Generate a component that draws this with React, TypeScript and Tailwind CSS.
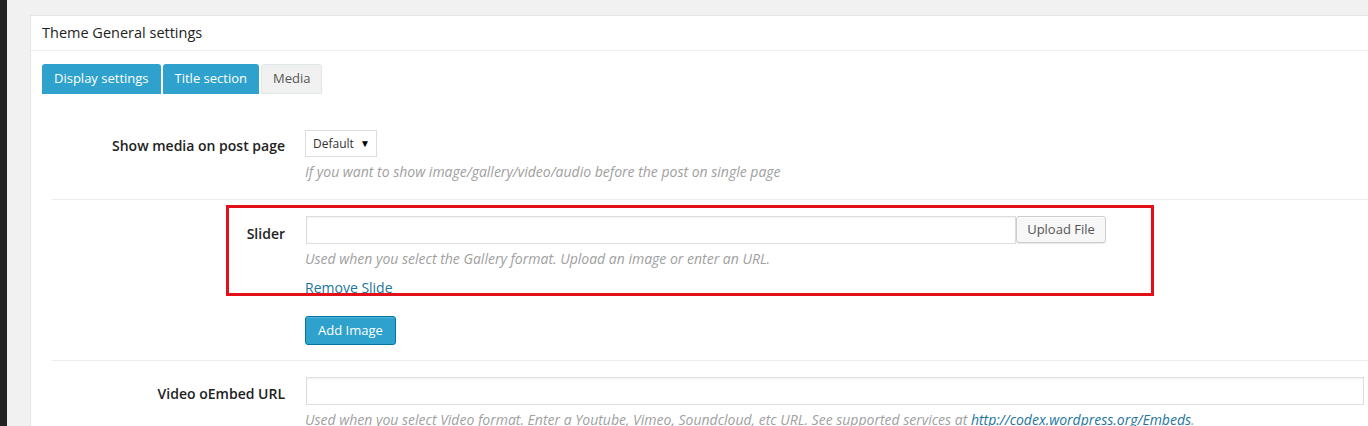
import React from "react";

const font = { fontFamily: '"Open Sans", "Noto Sans", Arial, sans-serif' };

function Row({
  label,
  labelPt,
  rowPt,
  children,
  border = true,
  pb,
}: {
  label: string;
  labelPt: string;
  rowPt: string;
  children: React.ReactNode;
  border?: boolean;
  pb: string;
}) {
  return (
    <div className={`flex ${border ? "border-b border-[#ececec]" : ""} ${pb}`}>
      <div className={`w-[253px] shrink-0 pr-[20px] text-right text-[14px] font-semibold leading-[20px] text-[#222] ${labelPt}`}>
        {label}
      </div>
      <div className={`flex-1 flex flex-col items-start ${rowPt}`}>{children}</div>
    </div>
  );
}

export default function App() {
  return (
    <div className="flex w-[1368px] h-[426px] overflow-hidden bg-[#f1f1f1]" style={font}>
      <div className="w-[7px] shrink-0 bg-[#222]" />
      <div className="flex-1 pl-[23px] pt-[15px]">
        <div className="bg-white border-l border-t border-[#e5e5e5] h-full">
          <div className="h-[35px] border-b border-[#eee] px-[11px] flex items-center text-[14.5px] text-[#222] leading-none">
            Theme General settings
          </div>
          <div className="pl-[11px] pt-[13px] flex gap-[2px]">
            <div className="h-[30px] px-[12px] flex items-center rounded-t-[3px] bg-[#2ea2cc] text-white text-[13px]">
              Display settings
            </div>
            <div className="h-[30px] px-[12px] flex items-center rounded-t-[3px] bg-[#2ea2cc] text-white text-[13px]">
              Title section
            </div>
            <div className="h-[30px] px-[11px] flex items-center rounded-t-[3px] bg-[#f1f1f1] border border-[#dfe6ea] text-[#555] text-[13px]">
              Media
            </div>
          </div>
          <div className="ml-[21px] mt-[21px]">
            <Row label="Show media on post page" labelPt="pt-[21px]" rowPt="pt-[15px]" pb="pb-[17px]">
              <div className="h-[27px] w-[72px] border border-[#ddd] flex items-center justify-between pl-[7px] pr-[6px] text-[12px] text-[#333]">
                <span>Default</span>
                <span className="text-[10px] text-black">▼</span>
              </div>
              <div className="mt-[5px] text-[14px] leading-[20px] italic text-[#a0a0a0]">
                If you want to show image/gallery/video/audio before the post on single page
              </div>
            </Row>
            <div className="relative">
              <Row label="Slider" labelPt="pt-[24px]" rowPt="pt-[16px]" pb="pb-[15px]">
                <div className="flex items-start pl-[1px]">
                  <div className="h-[28px] w-[710px] border border-[#ddd] bg-white shadow-[inset_0_1px_2px_rgba(0,0,0,0.05)]" />
                  <div className="h-[27px] w-[90px] rounded-[3px] border border-[#ccc] bg-[#f7f7f7] text-[13px] text-[#555] flex items-center justify-center shadow-[0_1px_0_#fff_inset,0_1px_0_rgba(0,0,0,0.08)]">
                    Upload File
                  </div>
                </div>
                <div className="mt-[5px] text-[14px] leading-[20px] italic text-[#a0a0a0]">
                  Used when you select the Gallery format. Upload an image or enter an URL.
                </div>
                <div className="mt-[9px] text-[14px] leading-[20px] text-[#21759b]">Remove Slide</div>
                <div className="mt-[18px] h-[29px] px-[12px] rounded-[3px] border border-[#0074a2] bg-[#2ea2cc] text-white text-[13px] flex items-center shadow-[inset_0_1px_0_rgba(120,200,230,0.5)]">
                  Add Image
                </div>
              </Row>
              <div className="absolute left-[174px] top-[5px] w-[928px] h-[91px] border-[3px] border-[#e3101a] pointer-events-none" />
            </div>
            <Row label="Video oEmbed URL" labelPt="pt-[23px]" rowPt="pt-[16px]" border={false} pb="pb-0">
              <div className="ml-[1px] h-[28px] w-[1058px] border border-[#ddd] bg-white shadow-[inset_0_1px_2px_rgba(0,0,0,0.05)]" />
              <div className="mt-[5px] text-[14px] leading-[20px] italic text-[#a0a0a0] whitespace-nowrap">
                Used when you select Video format. Enter a Youtube, Vimeo, Soundcloud, etc URL. See supported services at{" "}
                <span className="text-[#21759b]">http://codex.wordpress.org/Embeds</span>.
              </div>
            </Row>
          </div>
        </div>
      </div>
    </div>
  );
}
